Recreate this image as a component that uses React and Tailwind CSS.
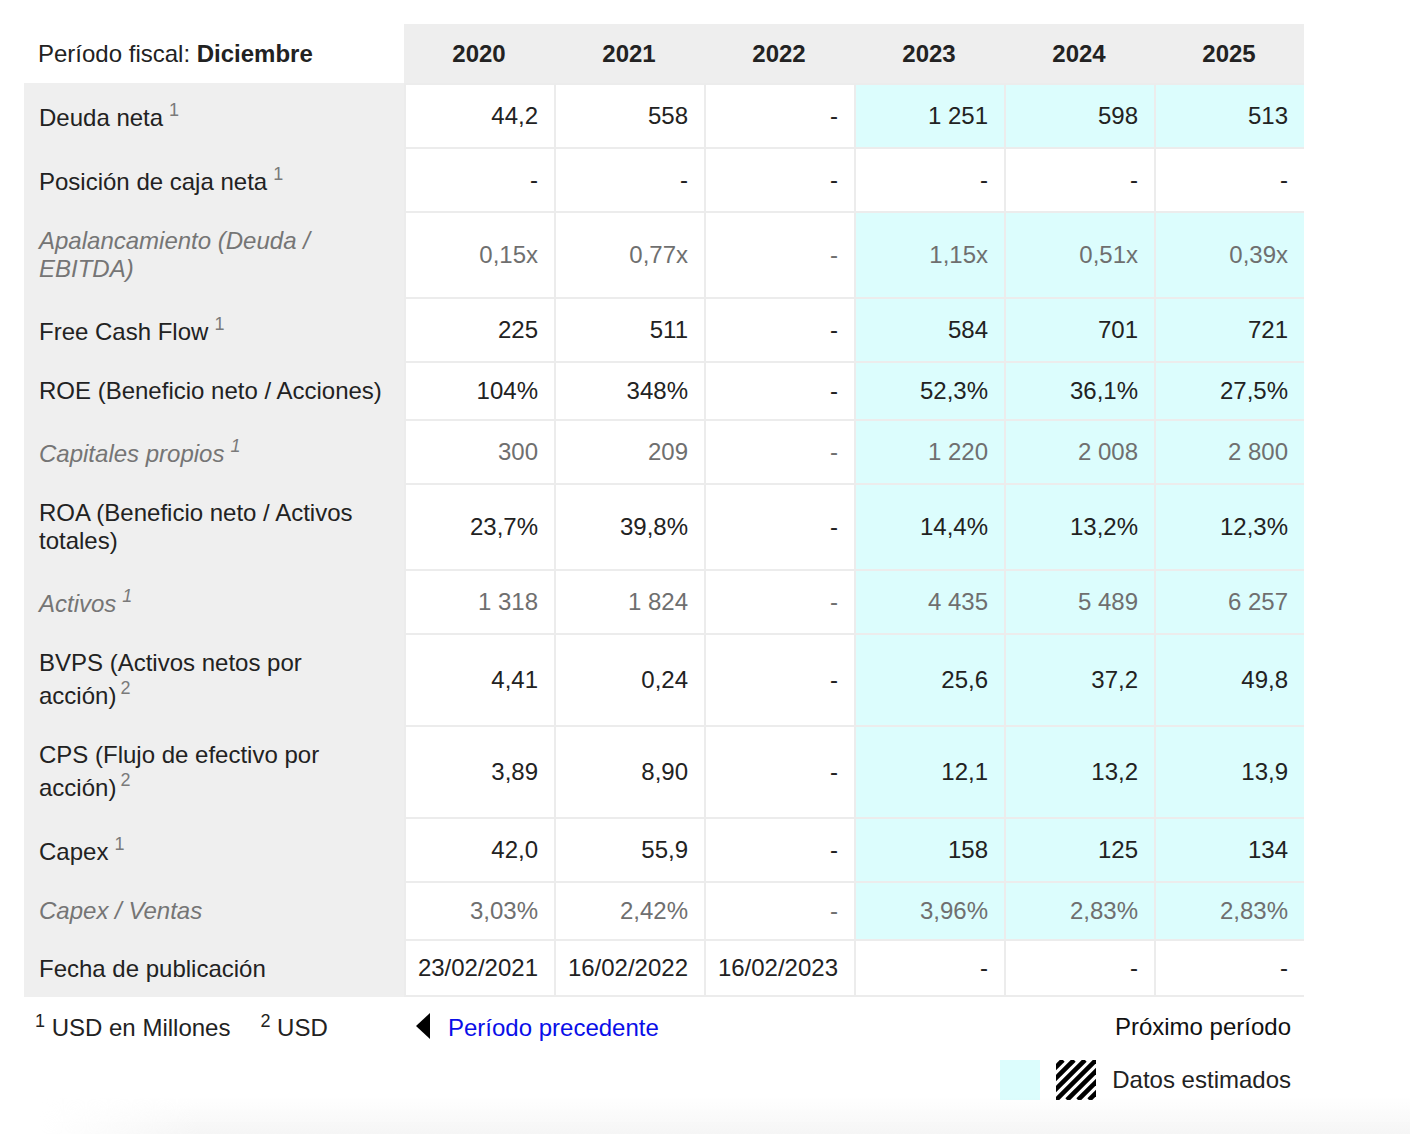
import React from "react";

const rows = [
  { lines: [{ t: "Deuda neta", sup: "1", sp: true }], vals: ["44,2", "558", "-", "1 251", "598", "513"], cyan: true },
  { lines: [{ t: "Posición de caja neta", sup: "1", sp: true }], vals: ["-", "-", "-", "-", "-", "-"], cyan: false },
  { lines: [{ t: "Apalancamiento (Deuda /" }, { t: "EBITDA)" }], vals: ["0,15x", "0,77x", "-", "1,15x", "0,51x", "0,39x"], cyan: true, it: true },
  { lines: [{ t: "Free Cash Flow", sup: "1", sp: true }], vals: ["225", "511", "-", "584", "701", "721"], cyan: true },
  { lines: [{ t: "ROE (Beneficio neto / Acciones)" }], vals: ["104%", "348%", "-", "52,3%", "36,1%", "27,5%"], cyan: true },
  { lines: [{ t: "Capitales propios", sup: "1", sp: true }], vals: ["300", "209", "-", "1 220", "2 008", "2 800"], cyan: true, it: true },
  { lines: [{ t: "ROA (Beneficio neto / Activos" }, { t: "totales)" }], vals: ["23,7%", "39,8%", "-", "14,4%", "13,2%", "12,3%"], cyan: true },
  { lines: [{ t: "Activos", sup: "1", sp: true }], vals: ["1 318", "1 824", "-", "4 435", "5 489", "6 257"], cyan: true, it: true },
  { lines: [{ t: "BVPS (Activos netos por" }, { t: "acción)", sup: "2" }], vals: ["4,41", "0,24", "-", "25,6", "37,2", "49,8"], cyan: true },
  { lines: [{ t: "CPS (Flujo de efectivo por" }, { t: "acción)", sup: "2" }], vals: ["3,89", "8,90", "-", "12,1", "13,2", "13,9"], cyan: true },
  { lines: [{ t: "Capex", sup: "1", sp: true }], vals: ["42,0", "55,9", "-", "158", "125", "134"], cyan: true },
  { lines: [{ t: "Capex / Ventas" }], vals: ["3,03%", "2,42%", "-", "3,96%", "2,83%", "2,83%"], cyan: true, it: true },
  { lines: [{ t: "Fecha de publicación" }], vals: ["23/02/2021", "16/02/2022", "16/02/2023", "-", "-", "-"], cyan: false, last: true },
];

const heightClass = {
  58: "h-[58px]",
  64: "h-[64px]",
  86: "h-[86px]",
  92: "h-[92px]",
};

const years = ["2020", "2021", "2022", "2023", "2024", "2025"];

function LabelLine({ line }) {
  return (
    <div className={line.sup ? "h-[34px] pt-[5px] leading-[28px] whitespace-nowrap" : "h-[28px] leading-[28px] whitespace-nowrap"}>
      <span>{line.t}</span>
      {line.sup && (
        <span
          className={
            "relative -top-[10px] text-[18px] leading-none text-[#7a7a7a] " +
            (line.sp ? "ml-[6px]" : "ml-[4px]")
          }
        >
          {line.sup}
        </span>
      )}
    </div>
  );
}

function Row({ r }) {
  const h = 30 + r.lines.reduce((a, l) => a + (l.sup ? 34 : 28), 0);
  return (
    <div className={"flex " + heightClass[h]}>
      <div
        className={
          "w-[380px] bg-[#efefef] border-t-2 border-[#efefef] pl-[15px] pt-[14px] " +
          (r.it ? "italic text-[#757575]" : "text-[#222]")
        }
      >
        {r.lines.map((l, i) => (
          <LabelLine key={i} line={l} />
        ))}
      </div>
      {r.vals.map((v, i) => (
        <div
          key={i}
          className={
            "w-[150px] border-t-2 border-l-2 border-[#ececec] flex items-center justify-end pr-[16px] pb-[1px] " +
            (r.last ? "border-b-2 " : "") +
            (r.cyan && i >= 3 ? "bg-[#dcfdfd] " : "bg-white ") +
            (r.it ? "text-[#6f6f6f]" : "text-[#222]")
          }
        >
          {v}
        </div>
      ))}
    </div>
  );
}

function Hatch() {
  const xs = [];
  for (let x = -44; x <= 44; x += 11) xs.push(x);
  return (
    <svg width="40" height="40" viewBox="0 0 40 40" className="block">
      <rect width="40" height="40" fill="white" />
      {xs.map((x) => (
        <line key={x} x1={x} y1={40} x2={x + 40} y2={0} stroke="black" strokeWidth="4.6" />
      ))}
    </svg>
  );
}

export default function App() {
  return (
    <div
      className="relative w-[1410px] h-[1134px] overflow-hidden bg-white text-[24px] leading-[28px] text-[#222]"
      style={{ fontFamily: '"Liberation Sans", Arial, Helvetica, sans-serif' }}
    >
      <div className="pt-[24px] pl-[24px]">
        <div className="w-[1280px]">
          {/* header */}
          <div className="flex h-[59px]">
            <div className="w-[380px] bg-white flex items-center pl-[14px]">
              <span>
                Período fiscal: <span className="font-bold">Diciembre</span>
              </span>
            </div>
            {years.map((y) => (
              <div key={y} className="w-[150px] bg-[#eeeeee] flex items-center justify-center font-bold text-[#222]">
                {y}
              </div>
            ))}
          </div>
          {rows.map((r, i) => (
            <Row key={i} r={r} />
          ))}

          {/* footer */}
          <div className="flex mt-[17px] h-[28px] items-center">
            <div className="w-[380px] flex items-center pl-[11px] whitespace-nowrap">
              <span>
                <span className="relative -top-[9px] text-[18px] leading-none">1</span> USD en Millones
              </span>
              <span className="ml-[30px]">
                <span className="relative -top-[9px] text-[18px] leading-none">2</span> USD
              </span>
            </div>
            <div className="flex items-center ml-[12px]">
              <svg width="14" height="26" viewBox="0 0 14 26" className="block -mt-[4px]">
                <polygon points="14,0 14,26 0,13" fill="black" />
              </svg>
              <span className="ml-[18px] text-[#0a0ee8]">Período precedente</span>
            </div>
            <div className="ml-auto pr-[13px] -mt-[3px] text-[#111]">Próximo período</div>
          </div>
          <div className="flex justify-end items-center mt-[18px] pr-[13px]">
            <div className="w-[40px] h-[40px] bg-[#dcfdfd]" />
            <div className="ml-[16px]">
              <Hatch />
            </div>
            <div className="ml-[16px] text-[#222]">Datos estimados</div>
          </div>
        </div>
      </div>
      <div className="absolute left-0 right-0 bottom-0 h-[36px] bg-linear-to-b from-transparent to-[#f5f5f5] [mask-image:linear-gradient(to_right,transparent_40px,black_200px)]" />
    </div>
  );
}
